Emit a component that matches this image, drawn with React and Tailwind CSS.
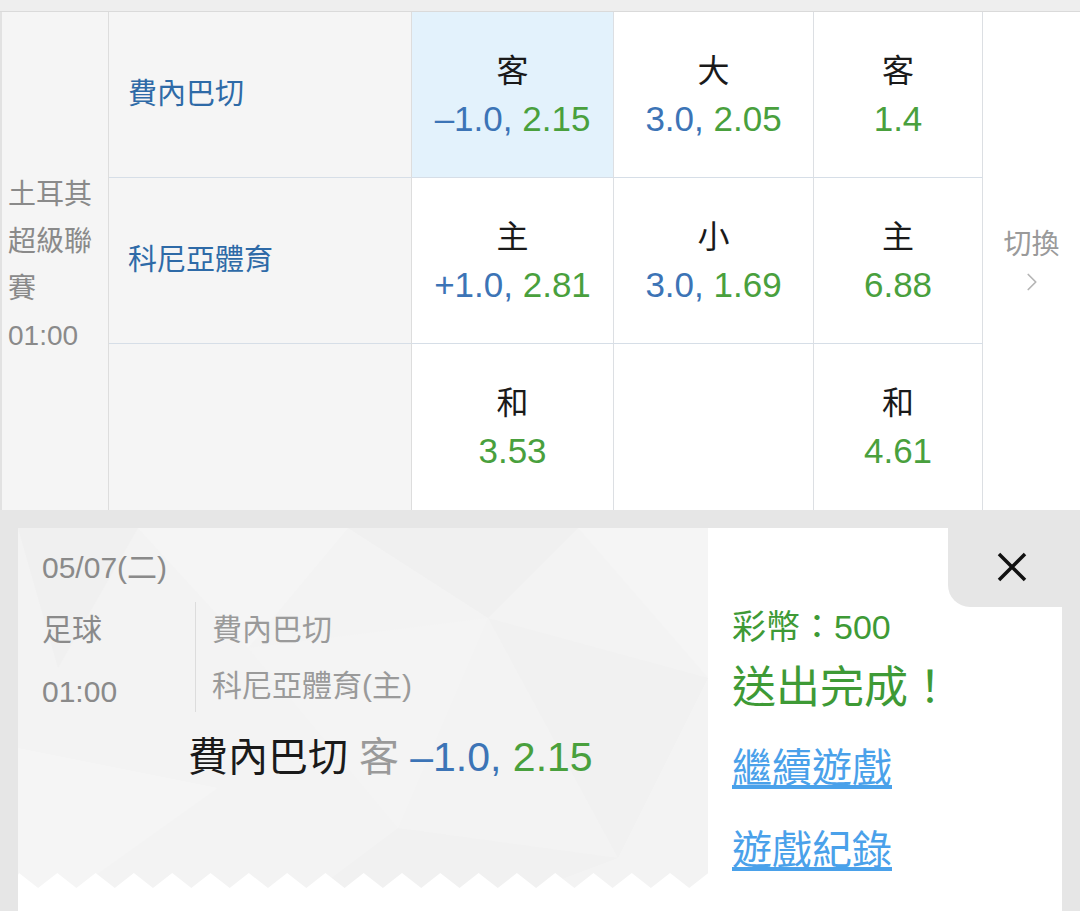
import React from 'react';
import { ChevronRight } from 'lucide-react';

const rows = [
  {
    team: '費內巴切',
    cells: [
      { label: '客', line: '–1.0,', odds: '2.15', active: true },
      { label: '大', line: '3.0,', odds: '2.05' },
      { label: '客', odds: '1.4' },
    ],
  },
  {
    team: '科尼亞體育',
    cells: [
      { label: '主', line: '+1.0,', odds: '2.81' },
      { label: '小', line: '3.0,', odds: '1.69' },
      { label: '主', odds: '6.88' },
    ],
  },
  {
    team: '',
    cells: [{ label: '和', odds: '3.53' }, null, { label: '和', odds: '4.61' }],
  },
];

const OddsCell = ({ cell, last }) => (
  <div
    className={`flex flex-col items-center justify-center border-r border-[#dcdfe3] ${
      last ? '' : 'border-b border-b-[#d6dee7]'
    } ${cell && cell.active ? 'bg-[#e3f2fc]' : 'bg-white'}`}
  >
    {cell && (
      <>
        <div className="text-[32px] leading-[48px] text-[#1a1a1a]">{cell.label}</div>
        <div className="text-[35px] leading-[48px]">
          {cell.line && <span className="text-[#3c74b6]">{cell.line} </span>}
          <span className="text-[#49a03d]">{cell.odds}</span>
        </div>
      </>
    )}
  </div>
);

// zigzag edge for the bottom of the ticket
const zigzag = () => {
  let d = 'M0 15 L0 2';
  for (let x = 1; x < 700; x += 38.3) {
    d += ` L${x.toFixed(1)} 0 L${(x + 19.15).toFixed(1)} 15`;
  }
  d += ' L690 15 Z';
  return d;
};

export default function App() {
  return (
    <div className="w-[1080px] h-[911px] overflow-hidden bg-white font-['Liberation_Sans','Noto_Sans_CJK_TC',sans-serif]">
      <div className="h-[12px] bg-[#eeeeee] border-b border-[#dadada]" />

      <div className="grid grid-cols-[109px_303px_202px_200px_169px_1fr] grid-rows-[166px_166px_166px]">
        <div className="row-span-3 flex flex-col justify-center pt-[8px] pl-[6px] pr-[1px] bg-[#f5f5f5] border-l-2 border-l-[#e2e2e2] border-r border-r-[#dddddd] text-[28px] leading-[47px] text-[#8a8a8a]">
          <div>土耳其超級聯賽</div>
          <div>01:00</div>
        </div>

        {rows.map((row, ri) => (
          <React.Fragment key={ri}>
            <div
              className={`flex items-center pl-[19px] bg-[#f5f5f5] border-r border-[#dddddd] ${
                ri < 2 ? 'border-b border-b-[#d6dee7]' : ''
              } text-[29px] text-[#2e6aa7]`}
            >
              {row.team}
            </div>
            {row.cells.map((cell, ci) => (
              <OddsCell key={ci} cell={cell} last={ri === 2} />
            ))}
            {ri === 0 && (
              <div className="row-span-3 col-start-6 row-start-1 flex flex-col items-center justify-center bg-white">
                <div className="text-[28px] leading-[40px] text-[#9a9a9a]">切換</div>
                <ChevronRight size={30} strokeWidth={1.4} className="text-[#b5b5b5] mt-[2px]" />
              </div>
            )}
          </React.Fragment>
        ))}
      </div>

      <div className="bg-[#e6e6e6] pt-[18px] px-[18px] h-[401px]">
        <div className="flex bg-white h-[383px]">
          <div className="relative w-[690px] h-[360px] bg-[#f3f3f3] overflow-hidden">
            <svg className="absolute inset-0" width="690" height="360" viewBox="0 0 690 360">
              <polygon points="0,0 120,0 40,140" fill="#f0f0f0" />
              <polygon points="120,0 330,0 230,120" fill="#f5f5f5" />
              <polygon points="330,0 560,0 470,90" fill="#f0f0f0" />
              <polygon points="560,0 690,0 690,150" fill="#f5f5f5" />
              <polygon points="470,90 690,150 600,330" fill="#f1f1f1" />
              <polygon points="0,220 200,260 60,360 0,360" fill="#f5f5f5" />
              <polygon points="230,120 470,90 380,300" fill="#f4f4f4" />
              <polygon points="380,300 600,330 520,360 300,360" fill="#f1f1f1" />
            </svg>

            <div className="relative pl-[24px] pt-[20px]">
              <div className="text-[30px] leading-[40px] text-[#8a8a8a]">05/07(二)</div>
              <div className="flex items-start mt-[14px] h-[112px]">
                <div className="w-[153px] text-[30px] text-[#8a8a8a]">
                  <div className="leading-[56px]">足球</div>
                  <div className="leading-[56px] mt-[6px]">01:00</div>
                </div>
                <div className="w-px h-[110px] bg-[#dcdcdc]" />
                <div className="pl-[16px] text-[30px] leading-[56px] text-[#9a9a9a]">
                  <div>費內巴切</div>
                  <div>科尼亞體育(主)</div>
                </div>
              </div>
              <div className="ml-[146px] mt-[15px] text-[40px] leading-[56px] whitespace-nowrap">
                <span className="text-[#1a1a1a]">費內巴切</span>
                <span className="text-[#9a9a9a]"> 客 </span>
                <span className="text-[#3c74b6] text-[41px]">–1.0, </span>
                <span className="text-[#49a03d] text-[41px]">2.15</span>
              </div>
            </div>

            <svg className="absolute bottom-0 left-0" width="690" height="15" viewBox="0 0 690 15">
              <path d={zigzag()} fill="#ffffff" />
            </svg>
          </div>

          <div className="relative flex-1">
            <div className="absolute top-0 right-0 w-[114px] h-[79px] bg-[#e6e6e6] rounded-bl-[22px] flex items-center justify-center pb-[2px] pl-[14px]">
              <svg width="30" height="30" viewBox="0 0 30 30">
                <path d="M2 2 L28 28 M28 2 L2 28" stroke="#111" strokeWidth="3.5" />
              </svg>
            </div>
            <div className="pl-[24px] pt-[79px] text-[#3e9a36]">
              <div className="text-[34px] leading-[40px]">彩幣：500</div>
              <div className="text-[44px] leading-[56px] mt-[13px]">送出完成！</div>
              <div className="mt-[28px] text-[40px] leading-[48px] text-[#4aa1ea] underline underline-offset-[3px]">繼續遊戲</div>
              <div className="mt-[34px] text-[40px] leading-[48px] text-[#4aa1ea] underline underline-offset-[3px]">遊戲紀錄</div>
            </div>
          </div>
        </div>
      </div>
    </div>
  );
}
